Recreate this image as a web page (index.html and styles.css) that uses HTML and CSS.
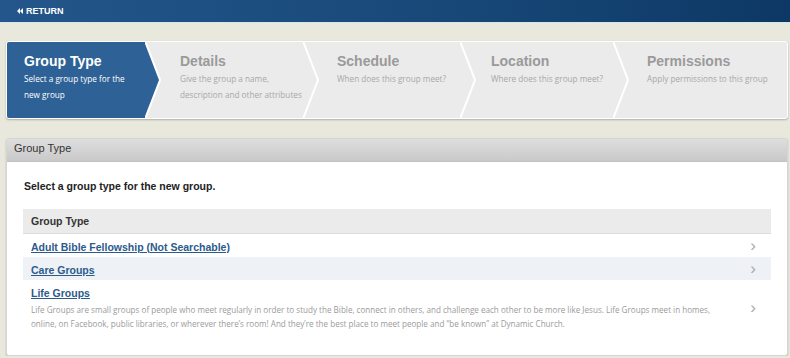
FILE: index.html
```html
<!DOCTYPE html>
<html lang="en">
<head>
  <meta charset="UTF-8" />
  <title>Add Group</title>
  <link rel="stylesheet" href="styles.css">
</head>
<body>

<div class="topbar">
  <a class="return" href="#">
    <svg width="6" height="6" viewBox="0 0 6 6"><path d="M3 0 L0 3 L3 6 Z M6 0 L3 3 L6 6 Z" fill="#fff"/></svg>
    RETURN
  </a>
</div>

<div class="page">
  <div class="wizard">
    <div class="step active s1">
      <div class="step-title">Group Type</div>
      <div class="step-desc">Select a group type for the<br>new group</div>
    </div>
    <svg class="sep" width="16" height="76" viewBox="0 0 16 76" preserveAspectRatio="none">
      <polygon points="0,0 15,38 0,76" fill="#2e6196"/>
      <polyline points="0,-1 15,38 0,77" fill="none" stroke="#fff" stroke-width="2"/>
    </svg>
    <div class="step s2">
      <div class="step-title">Details</div>
      <div class="step-desc">Give the group a name,<br>description and other attributes</div>
    </div>
    <svg class="sep" width="16" height="76" viewBox="0 0 16 76" preserveAspectRatio="none">
      <polyline points="0,-1 15,38 0,77" fill="none" stroke="#fff" stroke-width="2"/>
    </svg>
    <div class="step s3">
      <div class="step-title">Schedule</div>
      <div class="step-desc">When does this group meet?</div>
    </div>
    <svg class="sep" width="16" height="76" viewBox="0 0 16 76" preserveAspectRatio="none">
      <polyline points="0,-1 15,38 0,77" fill="none" stroke="#fff" stroke-width="2"/>
    </svg>
    <div class="step s4">
      <div class="step-title">Location</div>
      <div class="step-desc">Where does this group meet?</div>
    </div>
    <svg class="sep" width="16" height="76" viewBox="0 0 16 76" preserveAspectRatio="none">
      <polyline points="0,-1 15,38 0,77" fill="none" stroke="#fff" stroke-width="2"/>
    </svg>
    <div class="step s5">
      <div class="step-title">Permissions</div>
      <div class="step-desc">Apply permissions to this group</div>
    </div>
  </div>

  <div class="panel">
    <div class="panel-heading">Group Type</div>
    <div class="panel-body">
      <p class="intro">Select a group type for the new group.</p>

      <div class="grid">
        <div class="grid-head">Group Type</div>

        <div class="grid-row">
          <div class="row-main">
            <a href="#">Adult Bible Fellowship (Not Searchable)</a>
          </div>
          <span class="chev">&#8250;</span>
        </div>

        <div class="grid-row alt">
          <div class="row-main">
            <a href="#">Care Groups</a>
          </div>
          <span class="chev">&#8250;</span>
        </div>

        <div class="grid-row tall">
          <div class="row-main">
            <a href="#">Life Groups</a>
            <div class="row-desc">Life Groups are small groups of people who meet regularly in order to study the Bible, connect in others, and challenge each other to be more like Jesus. Life Groups meet in homes,<br>online, on Facebook, public libraries, or wherever there’s room! And they’re the best place to meet people and “be known” at Dynamic Church.</div>
          </div>
          <span class="chev">&#8250;</span>
        </div>
      </div>
    </div>
  </div>
</div>

</body>
</html>
```

FILE: styles.css
```css
body {
  margin: 0;
  font-family: 'Liberation Sans', Arial, sans-serif;
  background: #e9e8dc;
  color: #333;
}
.topbar {
  height: 22px;
  background: linear-gradient(to right, #24568b, #174777 60%, #0d3865);
  border-bottom: 1px solid #d2e8ec;
  display: flex;
  align-items: center;
  padding-left: 17px;
}
.return {
  color: #fff;
  font-size: 9px;
  font-weight: bold;
  text-decoration: none;
  display: flex;
  align-items: center;
  gap: 3px;
}
.page {
  padding: 18px 2px 0 6px;
}
.wizard {
  display: flex;
  background: #ebebeb;
  border: 1px solid #fff;
  border-radius: 3px;
  box-shadow: 0 1px 2px rgba(0,0,0,0.25);
  height: 76px;
  overflow: hidden;
}
.step {
  box-sizing: border-box;
  padding: 11px 0 0 18px;
  white-space: nowrap;
  min-width: 0;
}
.step.s1 { flex: 0 0 138px; padding-left: 17px; }
.step.s2 { flex: 0 0 142px; padding-left: 19px; }
.step.s3 { flex: 0 0 141px; padding-left: 18px; }
.step.s4 { flex: 0 0 137px; padding-left: 15px; }
.step.s5 { flex: 1; }
.step.active {
  background: #2e6196;
}
.sep {
  flex: 0 0 16px;
  display: block;
}
.step-title {
  font-size: 14px;
  font-weight: bold;
  color: #9a9a9a;
  margin-bottom: 2px;
}
.step-desc {
  font-family: 'Open Sans', sans-serif;
  font-size: 8.2px;
  line-height: 16px;
  color: #a8a8a8;
}
.step.active .step-title,
.step.active .step-desc {
  color: #fff;
}
.panel {
  margin-top: 19px;
  background: #fff;
  border: 1px solid #d6d6d0;
  border-radius: 3px;
  box-shadow: 0 1px 2px rgba(0,0,0,0.2);
}
.panel-heading {
  height: 22px;
  line-height: 19px;
  padding-left: 7px;
  font-size: 11px;
  color: #333;
  background: linear-gradient(#dedede, #c9c9c9);
  border-bottom: 1px solid #c2c2c2;
}
.panel-body {
  padding: 18px 16px 16px 16px;
}
.intro {
  margin: 0 0 17px 1px;
  font-size: 10.5px;
  line-height: 12px;
  font-weight: bold;
  color: #222;
}
.grid-head {
  height: 24px;
  line-height: 24px;
  padding-left: 8px;
  background: #ebebeb;
  border-bottom: 1px solid #dcdcdc;
  font-size: 10.5px;
  font-weight: bold;
  color: #333;
}
.grid-row {
  display: flex;
  align-items: center;
  padding: 0 15px 0 8px;
  height: 23px;
}
.grid-row.alt {
  background: #eef1f6;
}
.grid-row.tall {
  height: auto;
  padding-top: 3px;
  padding-bottom: 8px;
}
.row-main {
  flex: 1;
}
.row-main a {
  font-size: 10.5px;
  line-height: 14px;
  font-weight: bold;
  color: #2b5b8c;
}
.row-desc {
  font-family: 'Open Sans', sans-serif;
  font-size: 8.1px;
  line-height: 14px;
  color: #9b9b9b;
  margin-top: 2px;
  white-space: nowrap;
}
.chev {
  color: #aaa;
  font-size: 17px;
  line-height: 1;
}
```
